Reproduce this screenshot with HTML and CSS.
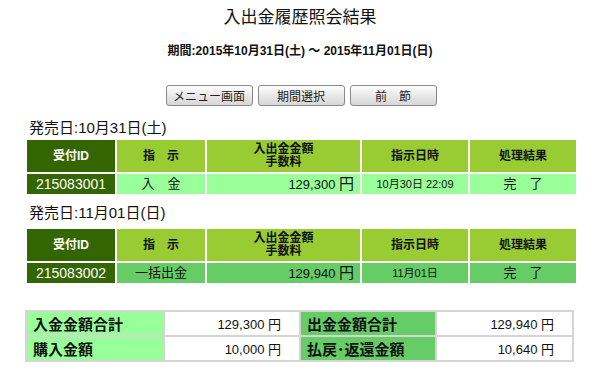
FILE: index.html
```html
<!DOCTYPE html>
<html lang="ja">
<head>
<meta charset="utf-8">
<title>入出金履歴照会結果</title>
<link rel="stylesheet" href="styles.css">
</head>
<body>
<div class="page">
  <h1 class="title">入出金履歴照会結果</h1>
  <p class="period">期間:2015年10月31日(土) ～ 2015年11月01日(日)</p>
  <div class="buttons">
    <button class="btn">メニュー画面</button>
    <button class="btn">期間選択</button>
    <button class="btn">前　節</button>
  </div>

  <h2 class="date">発売日:10月31日(土)</h2>
  <table class="hist">
    <colgroup><col class="c1"><col class="c2"><col class="c3"><col class="c4"><col class="c5"></colgroup>
    <tr class="head">
      <th class="id">受付ID</th>
      <th>指　示</th>
      <th>入出金金額<br>手数料</th>
      <th>指示日時</th>
      <th>処理結果</th>
    </tr>
    <tr class="row light">
      <td class="id">215083001</td>
      <td class="center">入　金</td>
      <td class="amount">129,300 <span class="yen">円</span></td>
      <td class="center small">10月30日 22:09</td>
      <td class="center">完　了</td>
    </tr>
  </table>

  <h2 class="date second">発売日:11月01日(日)</h2>
  <table class="hist second">
    <colgroup><col class="c1"><col class="c2"><col class="c3"><col class="c4"><col class="c5"></colgroup>
    <tr class="head">
      <th class="id">受付ID</th>
      <th>指　示</th>
      <th>入出金金額<br>手数料</th>
      <th>指示日時</th>
      <th>処理結果</th>
    </tr>
    <tr class="row medium">
      <td class="id">215083002</td>
      <td class="center">一括出金</td>
      <td class="amount">129,940 <span class="yen">円</span></td>
      <td class="center small">11月01日</td>
      <td class="center">完　了</td>
    </tr>
  </table>

  <table class="summary">
    <colgroup><col class="s1"><col class="s2"><col class="s3"><col class="s4"></colgroup>
    <tr>
      <th class="in">入金金額合計</th>
      <td>129,300 円</td>
      <th class="out">出金金額合計</th>
      <td>129,940 円</td>
    </tr>
    <tr>
      <th class="in">購入金額</th>
      <td>10,000 円</td>
      <th class="out">払戻･返還金額</th>
      <td>10,640 円</td>
    </tr>
  </table>
</div>
</body>
</html>
```

FILE: styles.css
```css
html, body {
  margin: 0;
  padding: 0;
  background: #fff;
}
body {
  font-family: "Liberation Sans", "Noto Sans CJK JP", sans-serif;
  color: #111;
}
.page {
  width: 600px;
  padding-top: 8px;
}
.title {
  margin: 0;
  font-size: 17px;
  font-weight: normal;
  line-height: 20px;
  text-align: center;
}
.period {
  margin: 15px 0 0;
  font-size: 12px;
  font-weight: bold;
  line-height: 16px;
  text-align: center;
}
.buttons {
  margin-top: 26px;
  display: flex;
  justify-content: center;
  gap: 5px;
  padding-left: 2px;
}
.btn {
  width: 87px;
  height: 21px;
  padding: 0;
  border: 1px solid #8a8a8a;
  border-radius: 3px;
  background: linear-gradient(#fdfdfd, #e9e9e9 50%, #d6d6d6);
  font-family: "Liberation Sans", "Noto Sans CJK JP", sans-serif;
  font-size: 12px;
  color: #222;
}
.date {
  margin: 13px 0 0 29px;
  font-size: 15px;
  font-weight: normal;
  line-height: 18px;
}
.date.second {
  margin-top: 8px;
}
.hist {
  margin: 1px 0 0 25px;
  border-collapse: collapse;
  table-layout: fixed;
  width: 551px;
}
.hist.second {
  margin-top: 5px;
}
.c1 { width: 90px; }
.c2 { width: 90px; }
.c3 { width: 155px; }
.c4 { width: 108px; }
.c5 { width: 108px; }
.hist th, .hist td {
  border: 2px solid #fff;
  padding: 0;
}
.hist .head th {
  height: 32px;
  background: #99cc33;
  font-size: 12px;
  font-weight: bold;
  line-height: 13px;
  text-align: center;
  color: #111;
}
.hist .head th.id {
  background: #336600;
  color: #fff;
}
.hist .row td {
  height: 20px;
  font-size: 13px;
  line-height: 16px;
}
.hist .light td { background: #99ff99; }
.hist .medium td { background: #66cc66; }
.hist .row td.id {
  background: #336600;
  color: #fff;
  font-size: 14px;
  text-align: center;
}
.center { text-align: center; }
.small { font-size: 11px !important; }
.amount {
  text-align: right;
  padding-right: 6px !important;
}
.yen { font-size: 15px; }
.summary {
  margin: 25px 0 0 25px;
  border-collapse: collapse;
  table-layout: fixed;
  width: 549px;
}
.s1 { width: 138px; }
.s2 { width: 136px; }
.s3 { width: 136px; }
.s4 { width: 137px; }
.summary th, .summary td {
  height: 23px;
  border: 2px solid #d4d4d4;
  padding: 0;
  font-size: 13px;
}
.summary th {
  text-align: left;
  padding-left: 6px;
  font-size: 15px;
  font-weight: bold;
}
.summary th.in { background: #99ff99; }
.summary th.out { background: #66cc66; }
.summary td {
  background: #fff;
  text-align: right;
  padding-right: 18px;
}
```
